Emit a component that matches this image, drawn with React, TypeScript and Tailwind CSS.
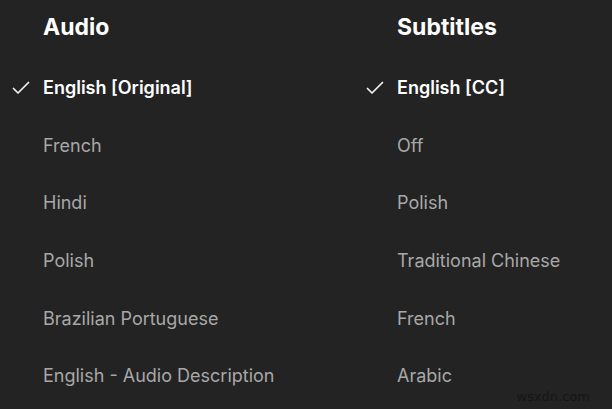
const audio = ['English [Original]', 'French', 'Hindi', 'Polish', 'Brazilian Portuguese', 'English - Audio Description'];
const subtitles = ['English [CC]', 'Off', 'Polish', 'Traditional Chinese', 'French', 'Arabic'];

function Check() {
  return (
    <svg width="18" height="14" viewBox="0 0 18 14" fill="none" className="absolute -left-[31px] top-1/2 -translate-y-1/2">
      <path d="M1.5 7.5 L6 12 L16.5 1.5" stroke="#f2f2f2" strokeWidth="1.7" strokeLinecap="round" strokeLinejoin="round" />
    </svg>
  );
}

function Column({ title, items }: { title: string; items: string[] }) {
  return (
    <div className="flex flex-col">
      <div className="h-[48px] mt-[3px] mb-[8px] flex items-center text-[23px] font-bold text-white">{title}</div>
      {items.map((item, i) => (
        <div key={item} className="h-[57.6px] flex items-center">
          <span className={`relative text-[18px] ${i === 0 ? 'font-semibold text-white' : 'text-[#a8a8a8]'}`}>
            {i === 0 && <Check />}
            {item}
          </span>
        </div>
      ))}
    </div>
  );
}

export default function App() {
  return (
    <div className="w-[612px] h-[409px] bg-[#232323] relative overflow-hidden" style={{ fontFamily: 'Inter, "Noto Sans", sans-serif' }}>
      <div className="grid grid-cols-[354px_1fr] pl-[43px]">
        <Column title="Audio" items={audio} />
        <Column title="Subtitles" items={subtitles} />
      </div>
      <div className="absolute right-[22px] bottom-[3px] text-[13px] text-[#161616]" style={{ fontFamily: '"DejaVu Sans", sans-serif' }}>wsxdn.com</div>
    </div>
  );
}
